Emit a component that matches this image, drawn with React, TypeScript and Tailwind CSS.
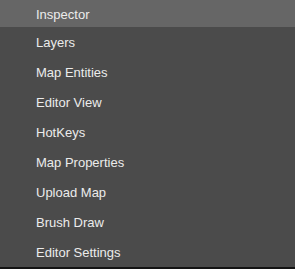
import React from "react";

const items = [
  "Inspector",
  "Layers",
  "Map Entities",
  "Editor View",
  "HotKeys",
  "Map Properties",
  "Upload Map",
  "Brush Draw",
  "Editor Settings",
];

export default function App() {
  return (
    <div className="w-[295px] h-[269px] bg-[#141414] font-['Liberation_Sans',Arial,sans-serif]">
      <ul className="bg-[#4b4b4b] flex flex-col">
        {items.map((label, i) => (
          <li
            key={label}
            className={`flex items-center pl-[36px] pt-[2px] text-[13px] text-[#ececec] ${
              i === 0 ? "h-[27px] bg-[#666666]" : "h-[30px]"
            }`}
          >
            {label}
          </li>
        ))}
      </ul>
    </div>
  );
}
